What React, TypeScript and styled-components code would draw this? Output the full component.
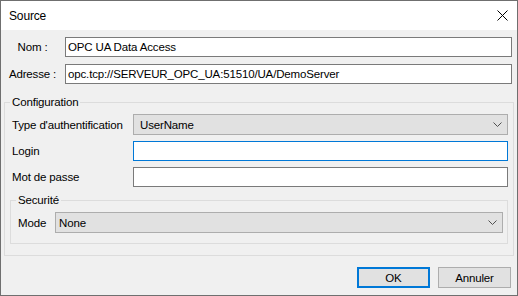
import React from 'react'
import styled, { createGlobalStyle } from 'styled-components'

const GlobalStyle = createGlobalStyle`
  html, body {
    margin: 0;
    padding: 0;
    background: #ffffff;
  }
  * {
    box-sizing: border-box;
  }
`

const FONT = `"Liberation Sans", Arial, sans-serif`

function Chevron() {
        return <svg width="9" height="5" viewBox="0 0 9 5">
                <polyline points="0.5,0.5 4.5,4.5 8.5,0.5" fill="none" stroke="#505050" strokeWidth="1" />
        </svg>
}

function CloseIcon() {
        return <svg width="11" height="11" viewBox="0 0 11 11">
                <path d="M0.5 0.5 L10.5 10.5 M10.5 0.5 L0.5 10.5" stroke="#000" strokeWidth="1" />
        </svg>
}

export default function App() {
        return <>
                <GlobalStyle />
                <Window>
                        <TitleBar>
                                <Title>Source</Title>
                                <CloseIcon />
                        </TitleBar>

                        <Body>
                                <TopGrid>
                                        <TopLabel>Nom :</TopLabel>
                                        <TextBox readOnly value="OPC UA Data Access" />
                                        <TopLabel>Adresse :</TopLabel>
                                        <TextBox readOnly value="opc.tcp://SERVEUR_OPC_UA:51510/UA/DemoServer" />
                                </TopGrid>

                                <ConfigGroup>
                                        <Legend>Configuration</Legend>
                                        <ConfigGrid>
                                                <Label>Type d'authentification</Label>
                                                <Combo $inset={6}>
                                                        <span>UserName</span>
                                                        <Chevron />
                                                </Combo>
                                                <Label>Login</Label>
                                                <TextBox readOnly value="" $focused />
                                                <Label>Mot de passe</Label>
                                                <TextBox readOnly value="" />
                                        </ConfigGrid>

                                        <SecurityGroup>
                                                <Legend>Securité</Legend>
                                                <SecurityGrid>
                                                        <Label>Mode</Label>
                                                        <Combo $inset={3}>
                                                                <span>None</span>
                                                                <Chevron />
                                                        </Combo>
                                                </SecurityGrid>
                                        </SecurityGroup>
                                </ConfigGroup>

                                <ButtonRow>
                                        <Button $default>OK</Button>
                                        <Button>Annuler</Button>
                                </ButtonRow>
                        </Body>
                </Window>
        </>
}

const Window = styled.div`
        width: 518px;
        height: 296px;
        border: 1px solid #6f6f6f;
        background: #f0f0f0;
        display: flex;
        flex-direction: column;
        font-family: ${FONT};
        font-size: 11.5px;
        letter-spacing: -0.15px;
        color: #000;
`
const TitleBar = styled.div`
        height: 29px;
        background: #ffffff;
        display: flex;
        align-items: center;
        justify-content: space-between;
        padding: 0 9px 0 8px;
`
const Title = styled.div`
        font-size: 12px;
`
const Body = styled.div`
        display: flex;
        flex-direction: column;
        padding: 7px 3px 0 3px;
`
const TopGrid = styled.div`
        display: grid;
        grid-template-columns: 57px 1fr;
        column-gap: 4px;
        row-gap: 7px;
        align-items: center;
        padding-right: 2px;
`
const TopLabel = styled.div`
        text-align: center;
`
const Label = styled.div`
        white-space: nowrap;
`
const TextBox = styled.input<{ $focused?: boolean }>`
        height: 20px;
        width: 100%;
        margin: 0;
        padding: 0 2px;
        font: inherit;
        letter-spacing: inherit;
        color: #000;
        background: #ffffff;
        border: 1px solid ${p => p.$focused ? '#0078d7' : '#7a7a7a'};
        border-radius: 0;
        outline: none;
`
const Combo = styled.div<{ $inset: number }>`
        height: 21px;
        display: flex;
        align-items: center;
        justify-content: space-between;
        padding: 0 5px 0 ${p => p.$inset}px;
        background: #e1e1e1;
        border: 1px solid #adadad;
`
const Group = styled.fieldset`
        min-width: 0;
        border: 1px solid #dcdcdc;
`
const ConfigGroup = styled(Group)`
        margin: 11px 0 0 0;
        padding: 5px 5px 11px 7px;
`
const SecurityGroup = styled(Group)`
        margin: 6px 0 0 -2px;
        padding: 5px 4px 10px 7px;
`
const Legend = styled.legend`
        padding: 0 2px;
        margin-left: -2px;
        line-height: 14px;
`
const ConfigGrid = styled.div`
        display: grid;
        grid-template-columns: 121px 1fr;
        row-gap: 6px;
        align-items: center;
`
const SecurityGrid = styled.div`
        display: grid;
        grid-template-columns: 37px 1fr;
        align-items: center;
`
const ButtonRow = styled.div`
        display: flex;
        justify-content: flex-end;
        gap: 8px;
        margin-top: 11px;
        padding-right: 3px;
`
const Button = styled.button<{ $default?: boolean }>`
        width: 73px;
        height: 21px;
        margin: 0;
        padding: 0;
        font: inherit;
        letter-spacing: inherit;
        color: #000;
        background: #e1e1e1;
        border: ${p => p.$default ? '2px solid #0078d7' : '1px solid #adadad'};
        border-radius: 0;
`
